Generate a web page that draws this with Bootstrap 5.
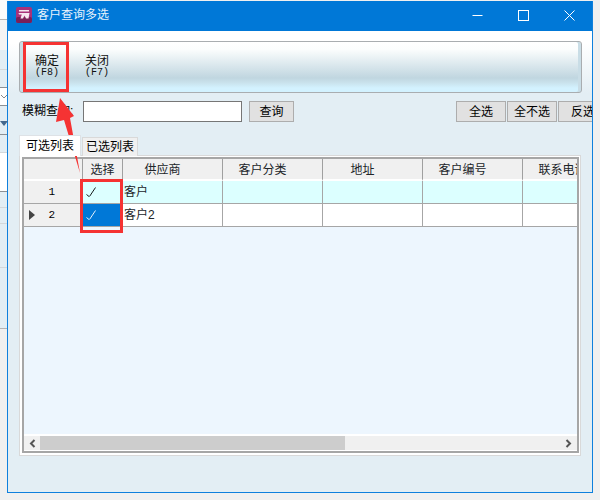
<!DOCTYPE html>
<html lang="zh">
<head>
<meta charset="utf-8">
<title>客户查询多选</title>
<link href="https://cdn.jsdelivr.net/npm/bootstrap@5.3.0/dist/css/bootstrap.min.css" rel="stylesheet">
<style>
html,body{height:500px;overflow:hidden}
body{background:#f0f0f0;font:12px/1.2 "Liberation Sans","Noto Sans CJK SC",sans-serif;color:#000;position:relative}
.back-strip{width:7px;flex:none;height:500px;position:relative;background:linear-gradient(#fbfbfb 0 19px,#b4b4b4 19px 20px,#f4f4f4 20px 50px,#e3eef4 50px 69px,#d4d8da 69px 70px,#e3eef4 70px 87px,#8c9094 87px 88px,#fff 88px 105px,#8c9094 105px 106px,#e3eef4 106px 134px,#8c9094 134px 135px,#e3eef4 135px 152px,#d4d8da 152px 153px,#fff 153px 191px,#8c9094 191px 192px,#e3eef4 192px 207px,#d4d8da 207px 208px,#e3eef4 208px 223px,#d4d8da 223px 224px,#e3eef4 224px 267px,#d4d8da 267px 268px,#e3eef4 268px 328px,#b4b4b4 328px 329px,#f0f0f0 329px)}
.strip-chev{position:absolute;left:1px;top:94px}
.strip-tri{position:absolute;left:0;top:121px;width:0;height:0;border-left:4px solid transparent;border-right:4px solid transparent;border-top:5px solid #44688c}
.win{width:586px;height:492px;flex:none;margin-top:1px;background:#e3eef4;border:1px solid #0f80dd;border-top:0;display:flex;flex-direction:column;overflow:hidden}
.ttl{height:30px;flex:none;background:#0078d7;color:#fff;padding:0 0 2px 8px}
.ttl-ic{width:16px;height:16px;margin-right:5px;flex:none}
.ttl-txt{font-size:12px;color:#e8f3fc}
.ctl{width:46px;height:28px;display:flex;align-items:center;justify-content:center}
.clientzone{flex:1;background:linear-gradient(#fff 0 12px,#e3eef4 62px);padding:10px 0 0 11px;min-height:0}
.tbar{width:563px;height:52px;border:1px solid #a9adb0;border-radius:3px;background:linear-gradient(#fff 0,#fbfdfd 15%,#c0d6e0 72%,#c8e0ea 80%,#d3f2ff 92%,#d3f2ff 100%);padding-left:2px;box-shadow:inset 3px 0 0 #c9dde6,inset -3px 0 0 #c9dde6}
.tbtn{width:50px;text-align:center;line-height:12px;padding-top:13px;font-size:12px;color:#111}
.tbtn b{font-weight:400;display:block;font-family:"Liberation Mono",monospace;font-size:10px;line-height:10px;margin-top:1px}
.qrow{height:21px;margin-top:8px;padding-left:3px;width:589px}
.qlabel{width:61px;font-size:12px;flex:none;white-space:nowrap}
.qinput.form-control{width:159px;height:21px;min-height:0;padding:0 3px;border:1px solid #767676;border-radius:0;font-size:12px;flex:none;background:#fff}
.wbtn.btn{height:21px;width:45px;padding:0;border:1px solid #adadad;border-radius:0;background:#e1e1e1;color:#000;font-size:12px;line-height:18px;flex:none}
.qspace{margin-left:7px}
.qgap{flex:1}
.qrow .gap1{margin-left:1px}
.wide{width:50px!important}
.tabset.nav-tabs{margin-top:13px;border:0;height:21px;align-items:flex-end;position:relative;z-index:1}
.tabset .nav-link{border:1px solid #d9d9d9;border-bottom:0;border-radius:0;background:#f0f0f0;color:#000;padding:0;text-align:center;font-size:12px;height:19px;line-height:19px;width:56px;margin:0 0 0 1px}
.tabset .nav-link.active{background:#fff;color:#000;width:62px;height:21px;line-height:20px;margin:0}
.tabpane{width:562px;height:301px;background:#fff;border:1px solid #d9d9d9;margin-top:-1px;padding:1px 2px 2px 2px}
.gridbox{width:557px;height:296px;border:2px solid #a6a6a6;background:#edf6fe;display:flex;flex-direction:column;overflow:hidden}
.gridtop{flex:1;overflow:hidden;min-height:0}
.gt.table{table-layout:fixed;width:578px;margin:0;border-collapse:separate;border-spacing:0;--bs-table-bg:transparent;font-size:12px}
.gt th,.gt td{padding:0;border:0;font-weight:400;box-shadow:none}
.gt thead th{background:#f0f0f0;height:22px;text-align:center;vertical-align:middle;position:relative;line-height:18px;border-bottom:2px solid #fff;padding-top:1px}
.gt thead th+th{border-left:1px solid #a0a0a0}
.gt thead th.hcut{padding-right:20px}
.gt tbody td,.gt tbody th{height:23px;vertical-align:middle;border-bottom:1px solid #a6a6a6;line-height:21px;border-left:1px solid #a6a6a6}
.gt tbody th{background:#f0f0f0;border-left:0;text-align:right;padding-right:27px;position:relative;color:#000;font-family:"Liberation Mono",monospace;font-size:11px}
.gt .r1 td{background:#dcffff}
.gt .r2 td{background:#fff}
.gt td.pad{padding-left:1px}
.gt td.sel{background:#0078d7!important;color:#fff}
.chk{display:block;margin-left:3px}
.cur{position:absolute;left:5px;top:6px;width:0;height:0;border-left:6px solid #444;border-top:5px solid transparent;border-bottom:5px solid transparent}
.hbar{height:17px;flex:none;background:#f0f0f0;border-top:2px solid #fff;border-bottom:1px solid #fff}
.sbtn{width:17px;flex:none;display:flex;align-items:center;justify-content:center}
.sbtn-l{width:16px}
.strack{flex:1;min-width:0;padding-right:215px}
.sthumb{height:100%;background:#cdcdcd}
.mark-over{position:absolute;left:0;top:0;pointer-events:none}
</style>
</head>
<body>
<div class="d-flex">
  <div class="back-strip">
    <svg class="strip-chev" width="6" height="6" viewBox="0 0 6 6"><path d="M0 1L3 4L6 1" stroke="#888" fill="none"/></svg>
    <span class="strip-tri"></span>
  </div>
  <div class="win">
    <div class="ttl d-flex align-items-center">
      <svg class="ttl-ic" viewBox="0 0 16 16"><rect width="16" height="16" rx="2" fill="#a8327a"/><rect y="10" width="16" height="6" rx="2" fill="#7a2058"/><path d="M3 3H13V4.500H3Z" fill="#f5e6f0"/><path d="M2.500 6H13.500L12.500 11.500H10L8.500 8.500L7 11.500H4.500L5.800 7.500H3Z" fill="#f5e6f0"/></svg>
      <span class="ttl-txt">客户查询多选</span>
      <div class="ms-auto d-flex">
        <div class="ctl"><svg width="11" height="11" viewBox="0 0 11 11"><path d="M0.500 5.500H10.500" stroke="#fff"/></svg></div>
        <div class="ctl"><svg width="11" height="11" viewBox="0 0 11 11"><rect x=".5" y=".5" width="10" height="10" fill="none" stroke="#fff"/></svg></div>
        <div class="ctl"><svg width="11" height="11" viewBox="0 0 11 11"><path d="M.5 .5L10.500 10.500M10.500 .5L.5 10.500" stroke="#fff"/></svg></div>
      </div>
    </div>
    <div class="clientzone">
      <div class="tbar d-flex">
        <div class="tbtn">确定<b>(F8)</b></div>
        <div class="tbtn">关闭<b>(F7)</b></div>
      </div>
      <div class="qrow d-flex align-items-center">
        <span class="qlabel">模糊查询:</span>
        <input class="form-control qinput" type="text" aria-label="模糊查询">
        <button class="btn wbtn qspace" type="button">查询</button>
        <div class="qgap"></div>
        <button class="btn wbtn wide" type="button">全选</button>
        <button class="btn wbtn wide gap1" type="button">全不选</button>
        <button class="btn wbtn wide gap1" type="button">反选</button>
      </div>
      <ul class="nav nav-tabs tabset">
        <li class="nav-item"><a class="nav-link active" href="#">可选列表</a></li>
        <li class="nav-item"><a class="nav-link" href="#">已选列表</a></li>
      </ul>
      <div class="tabpane">
        <div class="gridbox">
          <div class="gridtop">
            <table class="table gt">
              <colgroup><col style="width:58px"><col style="width:40px"><col style="width:100px"><col style="width:100px"><col style="width:100px"><col style="width:100px"><col style="width:80px"></colgroup>
              <thead><tr><th></th><th>选择</th><th class="hcut">供应商</th><th class="hcut">客户分类</th><th class="hcut">地址</th><th class="hcut">客户编号</th><th>联系电话</th></tr></thead>
              <tbody>
                <tr class="r1"><th>1</th><td><svg class="chk" width="10" height="11" viewBox="0 0 10 11"><path d="M.5 7.500L3 9.500M3.500 9.500L9.500 .5" stroke="#000" stroke-width=".9" fill="none"/></svg></td><td class="pad">客户</td><td></td><td></td><td></td><td></td></tr>
                <tr class="r2"><th><span class="cur"></span>2</th><td class="sel"><svg class="chk" width="10" height="11" viewBox="0 0 10 11"><path d="M.5 7.500L3 9.500M3.500 9.500L9.500 .5" stroke="#fff" stroke-width=".9" fill="none"/></svg></td><td class="pad">客户2</td><td></td><td></td><td></td><td></td></tr>
              </tbody>
            </table>
          </div>
          <div class="hbar d-flex">
            <div class="sbtn sbtn-l"><svg width="7" height="9" viewBox="0 0 7 9"><path d="M5.500 1L2 4.500L5.500 8" stroke="#555" stroke-width="2" fill="none"/></svg></div>
            <div class="strack"><div class="sthumb"></div></div>
            <div class="sbtn"><svg width="7" height="9" viewBox="0 0 7 9"><path d="M1.500 1L5 4.500L1.500 8" stroke="#555" stroke-width="2" fill="none"/></svg></div>
          </div>
        </div>
      </div>
    </div>
  </div>
</div>
<svg class="mark-over" width="600" height="500" viewBox="0 0 600 500">
  <rect x="24.500" y="43.500" width="43" height="47" fill="none" stroke="#f53333" stroke-width="3"/>
  <rect x="81.500" y="180.500" width="40" height="51" fill="none" stroke="#f53333" stroke-width="3"/>
  <path d="M60 98L74 116L70 118L80 173L64 120L56 122Z" fill="#f53333"/>
</svg>
</body>
</html>
